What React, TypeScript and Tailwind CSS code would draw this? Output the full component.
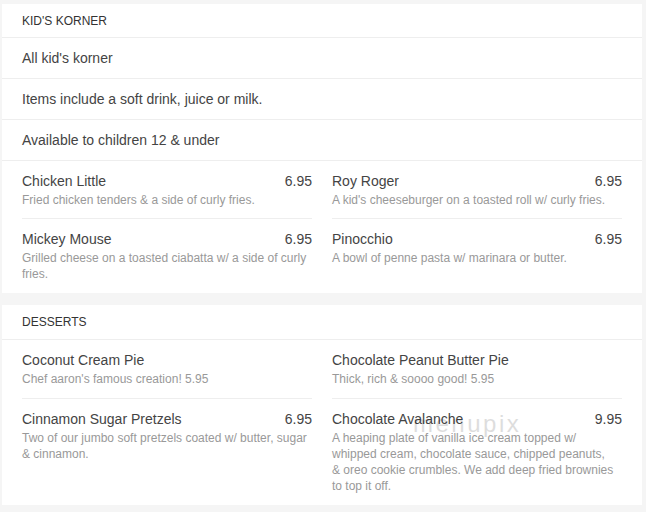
import React from "react";

type Item = { name: string; price?: string; desc: React.ReactNode };

const kids: Item[] = [
  { name: "Chicken Little", price: "6.95", desc: "Fried chicken tenders & a side of curly fries." },
  { name: "Roy Roger", price: "6.95", desc: "A kid's cheeseburger on a toasted roll w/ curly fries." },
  { name: "Mickey Mouse", price: "6.95", desc: "Grilled cheese on a toasted ciabatta w/ a side of curly fries." },
  { name: "Pinocchio", price: "6.95", desc: "A bowl of penne pasta w/ marinara or butter." },
];

const desserts: Item[] = [
  { name: "Coconut Cream Pie", desc: "Chef aaron's famous creation! 5.95" },
  { name: "Chocolate Peanut Butter Pie", desc: "Thick, rich & soooo good! 5.95" },
  { name: "Cinnamon Sugar Pretzels", price: "6.95", desc: "Two of our jumbo soft pretzels coated w/ butter, sugar & cinnamon." },
  {
    name: "Chocolate Avalanche",
    price: "9.95",
    desc: (
      <>
        A heaping plate of vanilla ice cream topped w/
        <br />
        whipped cream, chocolate sauce, chipped peanuts,
        <br />
        & oreo cookie crumbles. We add deep fried brownies
        <br />
        to top it off.
      </>
    ),
  },
];

function ItemGrid({ items, firstPb }: { items: Item[]; firstPb: string }) {
  return (
    <div className="px-5 grid grid-cols-2 gap-x-5">
      {items.map((it, i) => (
        <div
          key={it.name}
          className={
            i < items.length - 2
              ? `pt-[10px] ${firstPb} border-b border-[#eeeeee]`
              : "pt-[10px] pb-[11px]"
          }
        >
          <div className="flex justify-between text-[14px] leading-[20px] text-[#444444]">
            <span>{it.name}</span>
            {it.price && <span>{it.price}</span>}
          </div>
          <div className="mt-[1px] text-[12px] leading-[16px] text-[#999999]">{it.desc}</div>
        </div>
      ))}
    </div>
  );
}

export default function App() {
  return (
    <div className="min-h-[512px] bg-[#f5f5f5] pt-[4px] pb-[7px] pl-[2px] pr-[4px] font-['Liberation_Sans',Arial,sans-serif]">
      <div className="bg-white">
        <div className="h-[34px] px-5 flex items-center border-b border-[#eeeeee] text-[12px] text-[#333333]">
          KID'S KORNER
        </div>
        {["All kid's korner", "Items include a soft drink, juice or milk.", "Available to children 12 & under"].map((t) => (
          <div
            key={t}
            className="h-[41px] px-5 flex items-center border-b border-[#eeeeee] text-[14px] text-[#444444]"
          >
            {t}
          </div>
        ))}
        <ItemGrid items={kids} firstPb="pb-[10px]" />
      </div>
      <div className="relative mt-[12px] bg-white">
        <div className="h-[35px] px-5 flex items-center border-b border-[#eeeeee] text-[12px] text-[#333333]">
          DESSERTS
        </div>
        <ItemGrid items={desserts} firstPb="pb-[11px]" />
        <div className="pointer-events-none absolute left-[411px] top-[107px] text-[24px] leading-none tracking-[2.5px] text-[#000000] opacity-[0.13]">
          menupix
        </div>
      </div>
    </div>
  );
}
